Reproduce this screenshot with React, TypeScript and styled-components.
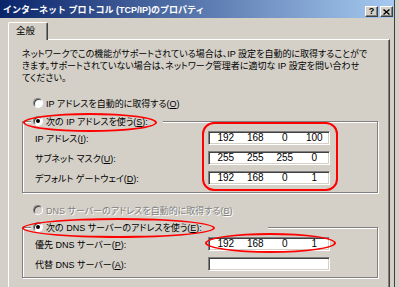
import React from 'react';
import styled, { createGlobalStyle } from 'styled-components';

const FACE = '#d4d0c8';

const GlobalStyle = createGlobalStyle`
  html, body {
    margin: 0;
    padding: 0;
    background: ${FACE};
  }
  body {
    font-family: 'Liberation Sans', 'Noto Sans CJK JP', sans-serif;
    font-feature-settings: 'palt';
    text-autospace: no-autospace;
  }
`;

const Screen = styled.div`
  width: 399px;
  height: 287px;
  overflow: hidden;
  background: ${FACE};
`;

const Dialog = styled.div`
  width: 394px;
  height: 100%;
  border-right: 1px solid #404040;
  display: flex;
  flex-direction: column;
  font-size: 9px;
  color: #000;
`;

const TitleBar = styled.div`
  flex: none;
  height: 18px;
  box-sizing: border-box;
  padding: 0 1px 1px 3px;
  display: flex;
  align-items: flex-end;
  justify-content: space-between;
  background: linear-gradient(to right, #0a246a, #a6caf0);
`;

const Title = styled.span`
  color: #fff;
  font-weight: bold;
  font-size: 9px;
  line-height: 12px;
  margin-bottom: 1px;
  white-space: nowrap;
  font-feature-settings: normal;
`;

const TitleButtons = styled.div`
  display: flex;
  gap: 2px;
`;

const TitleButton = styled.div`
  width: 13px;
  height: 11px;
  box-sizing: border-box;
  background: ${FACE};
  border: 1px solid;
  border-color: #fff #404040 #404040 #fff;
  box-shadow: inset -1px -1px 0 #808080;
  display: flex;
  align-items: center;
  justify-content: center;
  font: bold 9px 'Liberation Sans', sans-serif;
  line-height: 1;
`;

const TabStrip = styled.div`
  flex: none;
  display: flex;
  padding: 4px 0 0 8px;
`;

const Tab = styled.div`
  position: relative;
  z-index: 1;
  width: 40px;
  height: 18px;
  box-sizing: border-box;
  margin-bottom: -1px;
  padding: 2px 0 0 7px;
  background: ${FACE};
  border-top: 1px solid #fff;
  border-left: 1px solid #fff;
  border-right: 1px solid #404040;
  border-radius: 2px 2px 0 0;
  box-shadow: inset -1px 0 0 #808080;
  font-size: 9.5px;
  line-height: 12px;
`;

const Panel = styled.div`
  flex: 1;
  width: 382px;
  margin-left: 8px;
  box-sizing: border-box;
  border-top: 1px solid #fff;
  border-left: 1px solid #fff;
  border-right: 1px solid #404040;
  box-shadow: inset -1px 0 0 #808080;
  padding: 8px 11px 0 13px;
  display: flex;
  flex-direction: column;
`;

const Intro = styled.p`
  margin: 0;
  line-height: 12px;
  white-space: nowrap;
`;

const RadioRow = styled.label<{ $mt?: number; $disabled?: boolean }>`
  display: flex;
  align-items: center;
  gap: 3px;
  height: 14px;
  margin-top: ${(p) => p.$mt ?? 0}px;
  padding-left: 11px;
  white-space: nowrap;
  color: ${(p) => (p.$disabled ? '#808080' : '#000')};
  text-shadow: ${(p) => (p.$disabled ? '1px 1px 0 #fff' : 'none')};
`;

const RadioText = styled.span``;

const RadioMark = styled.span<{ $checked?: boolean; $disabled?: boolean }>`
  flex: none;
  width: 10px;
  height: 10px;
  box-sizing: border-box;
  border-radius: 50%;
  border: 1px solid;
  border-color: #808080 #fff #fff #808080;
  box-shadow: inset 1px 1px 0 #404040;
  background: ${(p) => (p.$disabled ? FACE : '#fff')};
  display: flex;
  align-items: center;
  justify-content: center;

  &::after {
    content: '';
    display: ${(p) => (p.$checked ? 'block' : 'none')};
    width: 4px;
    height: 4px;
    border-radius: 50%;
    background: #000;
  }
`;

const GroupHead = styled.div<{ $mt: number }>`
  position: relative;
  z-index: 1;
  display: flex;
  height: 14px;
  margin-top: ${(p) => p.$mt}px;
  padding-left: 9px;
`;

const Legend = styled.div<{ $w: number }>`
  display: grid;
  width: ${(p) => p.$w}px;
  background: ${FACE};
`;

const LegendRadio = styled(RadioRow)`
  grid-area: 1 / 1;
  padding-left: 2px;
`;

const Ring = styled.span<{ $m: string }>`
  grid-area: 1 / 1;
  margin: ${(p) => p.$m};
  border: 2px solid #f00;
  border-radius: 50%;
  pointer-events: none;
  z-index: 2;
`;

const GroupBox = styled.div<{ $pb: number }>`
  margin-top: -7px;
  padding: 6px 0 ${(p) => p.$pb}px 12px;
  border: 1px solid #808080;
  box-shadow: inset 1px 1px 0 #fff, 1px 1px 0 #fff;
`;

const FieldGrid = styled.div`
  display: grid;
  grid-template-columns: 173px 122px;
  grid-auto-rows: 20px;
  align-items: center;
`;

const FieldLabel = styled.span<{ $row: number }>`
  grid-column: 1;
  grid-row: ${(p) => p.$row};
  white-space: nowrap;
`;

const IpField = styled.div<{ $row: number }>`
  grid-column: 2;
  grid-row: ${(p) => p.$row};
  height: 14px;
  box-sizing: border-box;
  padding-left: 2px;
  background: #fff;
  border: 1px solid;
  border-color: #808080 #fff #fff #808080;
  box-shadow: inset 1px 1px 0 #404040, inset -1px -1px 0 ${FACE};
  display: grid;
  grid-template-columns: repeat(4, 1fr);
  align-items: center;
  font: 10px 'Liberation Sans', sans-serif;
`;

const Octet = styled.span`
  text-align: center;
  line-height: 12px;
`;

const FieldRing = styled.span<{ $rows: number; $m: string; $r: string }>`
  grid-column: 2;
  grid-row: 1 / span ${(p) => p.$rows};
  align-self: stretch;
  margin: ${(p) => p.$m};
  border: 2px solid #f00;
  border-radius: ${(p) => p.$r};
  pointer-events: none;
  z-index: 2;
`;

const ipRows = [
  { label: 'IP アドレス', key: 'I', octets: ['192', '168', '0', '100'] },
  { label: 'サブネット マスク', key: 'U', octets: ['255', '255', '255', '0'] },
  { label: 'デフォルト ゲートウェイ', key: 'D', octets: ['192', '168', '0', '1'] },
];

const dnsRows = [
  { label: '優先 DNS サーバー', key: 'P', octets: ['192', '168', '0', '1'] },
  { label: '代替 DNS サーバー', key: 'A', octets: ['', '', '', ''] },
];

type Row = { label: string; key: string; octets: string[] };

const Fields: React.FC<{ rows: Row[] }> = ({ rows }) => (
  <>
    {rows.map((row, i) => (
      <React.Fragment key={row.key}>
        <FieldLabel $row={i + 1}>
          {row.label}(<u>{row.key}</u>):
        </FieldLabel>
        <IpField $row={i + 1}>
          {row.octets.map((o, j) => (
            <Octet key={j}>{o}</Octet>
          ))}
        </IpField>
      </React.Fragment>
    ))}
  </>
);

const CloseGlyph = () => (
  <svg width="7" height="6" viewBox="0 0 7 6">
    <path d="M0.5 0.5 L6.5 5.5 M6.5 0.5 L0.5 5.5" stroke="#000" strokeWidth="1.4" />
  </svg>
);

const App: React.FC = () => (
  <Screen>
    <GlobalStyle />
    <Dialog>
      <TitleBar>
        <Title>インターネット プロトコル (TCP/IP)のプロパティ</Title>
        <TitleButtons>
          <TitleButton>?</TitleButton>
          <TitleButton>
            <CloseGlyph />
          </TitleButton>
        </TitleButtons>
      </TitleBar>

      <TabStrip>
        <Tab>全般</Tab>
      </TabStrip>

      <Panel>
        <Intro>
          ネットワークでこの機能がサポートされている場合は、IP 設定を自動的に取得することがで
          <br />
          きます。サポートされていない場合は、ネットワーク管理者に適切な IP 設定を問い合わせ
          <br />
          てください。
        </Intro>

        <RadioRow $mt={12}>
          <RadioMark />
          <RadioText>
            IP アドレスを自動的に取得する(<u>O</u>)
          </RadioText>
        </RadioRow>

        <GroupHead $mt={4}>
          <Legend $w={132}>
            <LegendRadio>
              <RadioMark $checked />
              <RadioText>
                次の IP アドレスを使う(<u>S</u>):
              </RadioText>
            </LegendRadio>
            <Ring $m="-1px 6px -4px -8px" />
          </Legend>
        </GroupHead>
        <GroupBox $pb={4}>
          <FieldGrid>
            <Fields rows={ipRows} />
            <FieldRing $rows={3} $m="-6px -8px -3px -6px" $r="12px" />
          </FieldGrid>
        </GroupBox>

        <RadioRow $mt={10} $disabled>
          <RadioMark $disabled />
          <RadioText>
            DNS サーバーのアドレスを自動的に取得する(<u>B</u>)
          </RadioText>
        </RadioRow>

        <GroupHead $mt={3}>
          <Legend $w={237}>
            <LegendRadio>
              <RadioMark $checked />
              <RadioText>
                次の DNS サーバーのアドレスを使う(<u>E</u>):
              </RadioText>
            </LegendRadio>
            <Ring $m="-2px 53px -4px -9px" />
          </Legend>
        </GroupHead>
        <GroupBox $pb={3}>
          <FieldGrid>
            <Fields rows={dnsRows} />
            <FieldRing $rows={1} $m="-1px -6px 1px -3px" $r="50%" />
          </FieldGrid>
        </GroupBox>
      </Panel>
    </Dialog>
  </Screen>
);

export default App;
